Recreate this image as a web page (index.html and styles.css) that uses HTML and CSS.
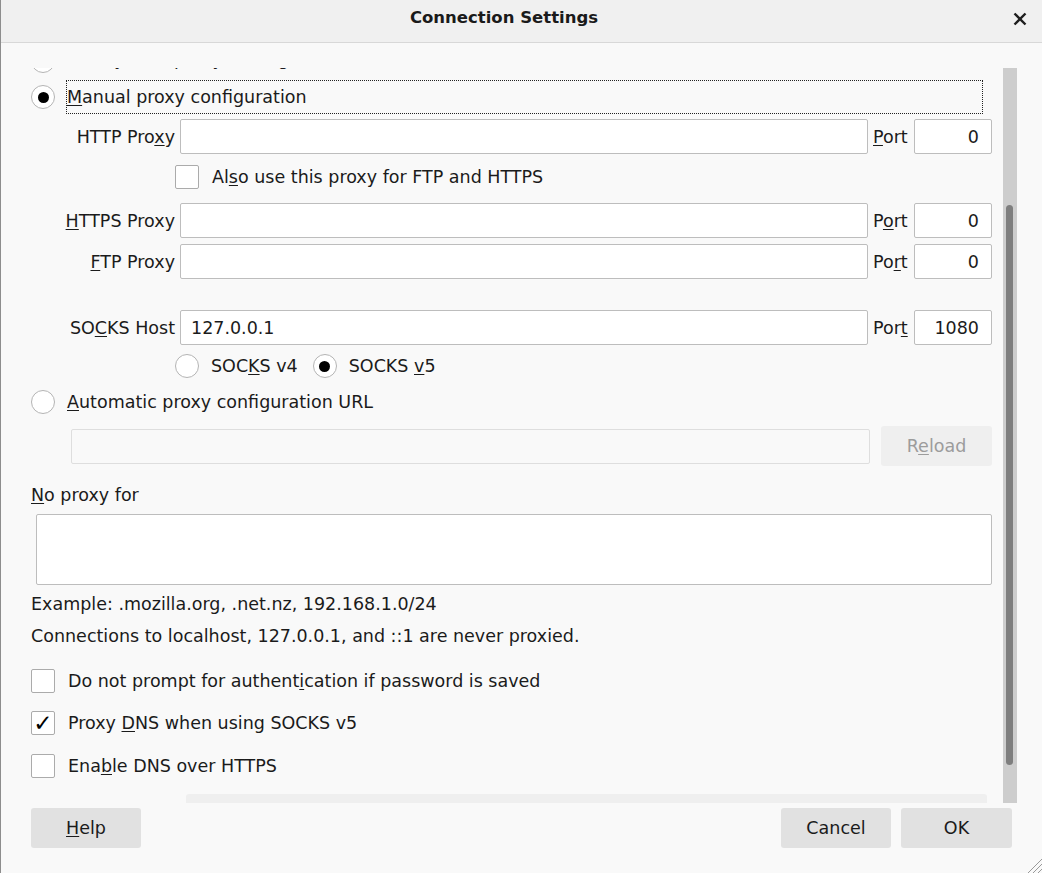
FILE: index.html
```html
<!DOCTYPE html>
<html lang="en">
<head>
<meta charset="utf-8">
<title>Connection Settings</title>
<link rel="stylesheet" href="styles.css">
</head>
<body>
<div class="window">
  <header class="titlebar">
    <h1 class="title">Connection Settings</h1>
    <div class="close">
      <svg width="14" height="14" viewBox="0 0 14 14"><path d="M1.5 1.5 L12.5 12.5 M12.5 1.5 L1.5 12.5" stroke="#1e1e1e" stroke-width="2.4" fill="none"/></svg>
    </div>
  </header>

  <div class="main">
    <div class="viewport">
      <div class="content">
        <div class="radio-row first">
          <span class="radio"></span>
          <span class="radio-label">Use system proxy settings</span>
        </div>
        <div class="radio-row manual">
          <span class="radio checked"></span>
          <span class="focus-label"><u>M</u>anual proxy configuration</span>
        </div>

        <div class="field-row r-http">
          <label class="f-label">HTTP Pro<u>x</u>y</label>
          <input class="text-input" type="text" value="">
          <label class="p-label"><u>P</u>ort</label>
          <input class="text-input port" type="text" value="0">
        </div>

        <div class="check-row r-also">
          <span class="check"></span>
          <span class="check-label">Al<u>s</u>o use this proxy for FTP and HTTPS</span>
        </div>

        <div class="field-row r-https">
          <label class="f-label"><u>H</u>TTPS Proxy</label>
          <input class="text-input" type="text" value="">
          <label class="p-label">P<u>o</u>rt</label>
          <input class="text-input port" type="text" value="0">
        </div>

        <div class="field-row r-ftp">
          <label class="f-label"><u>F</u>TP Proxy</label>
          <input class="text-input" type="text" value="">
          <label class="p-label">Po<u>r</u>t</label>
          <input class="text-input port" type="text" value="0">
        </div>

        <div class="field-row r-socks">
          <label class="f-label">SO<u>C</u>KS Host</label>
          <input class="text-input" type="text" value="127.0.0.1">
          <label class="p-label">Por<u>t</u></label>
          <input class="text-input port" type="text" value="1080">
        </div>

        <div class="socks-versions">
          <span class="radio"></span>
          <span class="sv-label">SOC<u>K</u>S v4</span>
          <span class="radio checked sv-second"></span>
          <span class="sv-label">SOCKS <u>v</u>5</span>
        </div>

        <div class="auto-row">
          <span class="radio"></span>
          <span class="radio-label"><u>A</u>utomatic proxy configuration URL</span>
        </div>

        <div class="url-row">
          <input class="text-input url-input" type="text" value="" disabled>
          <button class="btn btn-disabled" type="button">R<u>e</u>load</button>
        </div>

        <div class="plain-label np-label"><u>N</u>o proxy for</div>
        <textarea class="no-proxy"></textarea>
        <div class="plain-label ex-label">Example: .mozilla.org, .net.nz, 192.168.1.0/24</div>
        <div class="plain-label conn-label">Connections to localhost, 127.0.0.1, and ::1 are never proxied.</div>

        <div class="check-row opt r-auth">
          <span class="check"></span>
          <span class="check-label">Do not prompt for authent<u>i</u>cation if password is saved</span>
        </div>
        <div class="check-row opt r-dns">
          <span class="check checked">✓</span>
          <span class="check-label">Proxy <u>D</u>NS when using SOCKS v5</span>
        </div>
        <div class="check-row opt r-doh">
          <span class="check"></span>
          <span class="check-label">Ena<u>b</u>le DNS over HTTPS</span>
        </div>
        <div class="doh-select"></div>
      </div>
    </div>
    <div class="scrollbar"><div class="thumb"></div></div>
  </div>

  <footer class="footer">
    <button class="btn btn-help" type="button"><u>H</u>elp</button>
    <div class="footer-right">
      <button class="btn btn-cancel" type="button">Cancel</button>
      <button class="btn btn-ok" type="button">OK</button>
    </div>
  </footer>

  <svg class="grip" width="18" height="15" viewBox="0 0 18 15"><path d="M4 15 L18 1 M9 15 L18 6 M14 15 L18 11" stroke="#9a9a9a" stroke-width="1" fill="none"/></svg>
</div>
</body>
</html>
```

FILE: styles.css
```css
html, body {
  margin: 0;
  padding: 0;
}

body {
  font-family: "DejaVu Sans", "Liberation Sans", sans-serif;
  font-size: 17.5px;
  color: #1b1b1b;
  background: #f9f9f9;
}

u {
  text-decoration: underline;
  text-underline-offset: 2px;
}

.window {
  position: relative;
  width: 1042px;
  height: 873px;
  box-sizing: border-box;
  border-left: 1px solid #8d8d8d;
  background: #f9f9f9;
  display: flex;
  flex-direction: column;
  overflow: hidden;
}

/* title bar */
.titlebar {
  height: 42px;
  border-bottom: 1px solid #d8d8d8;
  background: #f0f0f0;
  display: flex;
  flex: none;
}

.title {
  flex: 1;
  margin: 0;
  padding-top: 8px;
  text-align: center;
  font-size: 16.5px;
  line-height: 20px;
  font-weight: bold;
  color: #1a1a1a;
}

.close {
  width: 35px;
  box-sizing: border-box;
  padding-left: 6px;
  padding-top: 12px;
}

.close svg {
  display: block;
}

/* main scroll region */
.main {
  display: flex;
  padding-top: 25px;
  height: 760px;
  box-sizing: border-box;
  flex: none;
}

.viewport {
  margin-left: 30px;
  width: 961px;
  height: 735px;
  overflow: hidden;
  flex: none;
}

.scrollbar {
  margin-left: 11px;
  width: 14px;
  height: 735px;
  box-sizing: border-box;
  padding-top: 137px;
  background: #cdcdcd;
  flex: none;
}

.thumb {
  margin-left: 3px;
  width: 7px;
  height: 560px;
  border-radius: 4px;
  background: #7e7e7e;
}

.content {
  display: flex;
  flex-direction: column;
  margin-top: -24px;
}

/* radios */
.radio {
  width: 24px;
  height: 24px;
  flex: none;
  box-sizing: border-box;
  border: 1px solid #b4b4b4;
  border-radius: 50%;
  background: #fff;
  display: flex;
  align-items: center;
  justify-content: center;
}

.radio.checked::after {
  content: "";
  width: 11px;
  height: 11px;
  border-radius: 50%;
  background: #000;
}

.radio-row {
  display: flex;
  align-items: center;
  height: 34px;
}

.radio-label {
  margin-left: 12px;
}

.first .radio-label {
  margin-top: -4px;
}

.manual {
  margin-top: 2px;
}

.focus-label {
  margin-left: 11px;
  width: 917px;
  height: 34px;
  box-sizing: border-box;
  border: 1px dotted #222;
  display: flex;
  align-items: center;
  padding-left: 0;
}

/* proxy fields */
.field-row {
  display: grid;
  grid-template-columns: 144px 688px 36px 78px;
  column-gap: 5px;
  align-items: center;
  height: 35px;
}

.f-label {
  text-align: right;
  white-space: nowrap;
}

.p-label {
  white-space: nowrap;
}

.text-input {
  height: 35px;
  width: 100%;
  box-sizing: border-box;
  border: 1px solid #bdbdbd;
  border-radius: 2px;
  background: #fff;
  font-family: inherit;
  font-size: 17.5px;
  color: #1b1b1b;
  padding: 0 10px;
  margin: 0;
  outline: none;
}

.text-input.port {
  text-align: right;
  padding-right: 12px;
}

.r-http { margin-top: 5px; }
.r-https { margin-top: 14px; }
.r-ftp { margin-top: 6px; }
.r-socks { margin-top: 31px; }

/* checkboxes */
.check-row {
  display: flex;
  align-items: center;
  height: 24px;
}

.check {
  width: 24px;
  height: 24px;
  flex: none;
  box-sizing: border-box;
  border: 1px solid #ababab;
  border-radius: 2px;
  background: #fff;
  display: flex;
  align-items: center;
  justify-content: center;
  font-size: 23px;
  line-height: 1;
  color: #000;
}

.check-label {
  margin-left: 13px;
}

.r-also {
  margin-top: 11px;
  padding-left: 144px;
}

.socks-versions {
  display: flex;
  align-items: center;
  height: 24px;
  margin-top: 9px;
  padding-left: 144px;
}

.sv-label {
  margin-left: 12px;
}

.sv-second {
  margin-left: 15px;
}

.auto-row {
  display: flex;
  align-items: center;
  height: 24px;
  margin-top: 12px;
}

.url-row {
  display: flex;
  align-items: center;
  height: 40px;
  margin-top: 12px;
  padding-left: 40px;
  column-gap: 11px;
}

.url-input {
  width: 799px;
  flex: none;
  background: #f9f9f9;
  border-color: #dedede;
}

/* buttons */
.btn {
  height: 40px;
  border: none;
  border-radius: 3px;
  background: #e1e1e1;
  font-family: inherit;
  font-size: 17.5px;
  color: #1b1b1b;
  padding: 0;
  margin: 0;
}

.btn-disabled {
  width: 111px;
  background: #efefef;
  color: #9c9c9c;
}

.plain-label {
  height: 20px;
  line-height: 20px;
}

.np-label { margin-top: 19px; }

.no-proxy {
  display: block;
  margin: 9px 0 0 5px;
  width: 956px;
  height: 71px;
  box-sizing: border-box;
  border: 1px solid #bdbdbd;
  border-radius: 2px;
  background: #fff;
  resize: none;
  font-family: inherit;
  font-size: 17.5px;
}

.ex-label { margin-top: 9px; }
.conn-label { margin-top: 12px; }

.r-auth { margin-top: 23px; }
.r-dns { margin-top: 18px; }
.r-doh { margin-top: 19px; }

.doh-select {
  margin: 16px 0 0 155px;
  width: 801px;
  height: 40px;
  border-radius: 3px;
  background: #efefef;
  flex: none;
}

/* footer */
.footer {
  display: flex;
  justify-content: space-between;
  padding: 5px 30px 0 30px;
  flex: none;
}

.footer-right {
  display: flex;
  column-gap: 10px;
}

.btn-help { width: 110px; }
.btn-cancel { width: 110px; }
.btn-ok { width: 111px; }

.grip {
  position: absolute;
  right: 0;
  bottom: 0;
}
```
